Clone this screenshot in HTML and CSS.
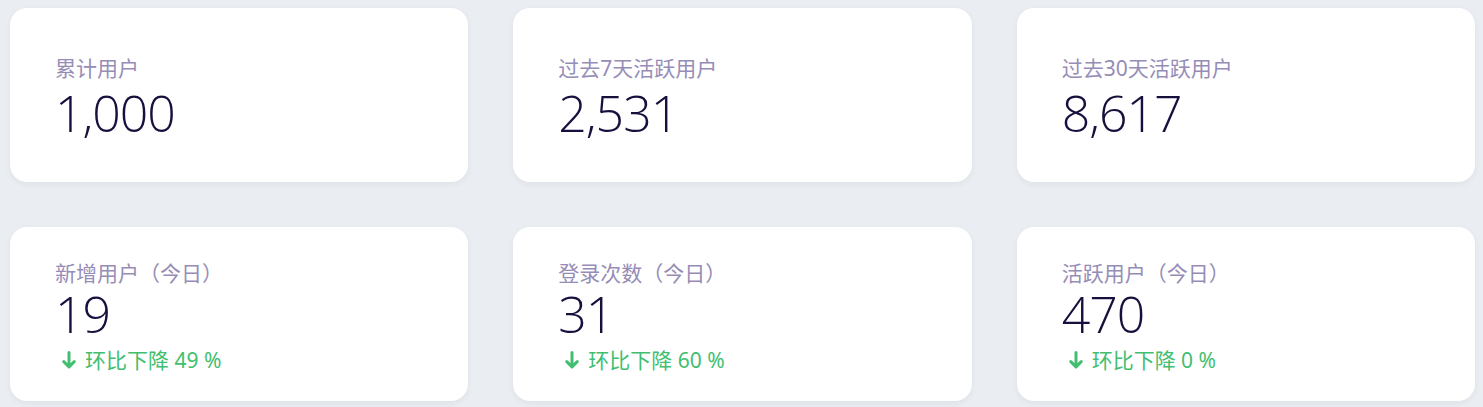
FILE: index.html
```html
<!DOCTYPE html>
<html lang="zh-CN">
<head>
<meta charset="utf-8">
<title>用户统计</title>
<link rel="stylesheet" href="styles.css">
</head>
<body>
<main class="stats">
  <section class="card">
    <div class="label">累计用户</div>
    <div class="value">1,000</div>
  </section>
  <section class="card">
    <div class="label">过去7天活跃用户</div>
    <div class="value">2,531</div>
  </section>
  <section class="card">
    <div class="label">过去30天活跃用户</div>
    <div class="value">8,617</div>
  </section>
  <section class="card card--trend">
    <div class="label">新增用户（今日）</div>
    <div class="value">19</div>
    <div class="trend">
      <svg class="trend-icon" viewBox="0 0 14 20" aria-hidden="true"><path d="M7 2.5V17M1.8 11.6L7 17l5.2-5.4"/></svg>
      <span>环比下降 49 %</span>
    </div>
  </section>
  <section class="card card--trend">
    <div class="label">登录次数（今日）</div>
    <div class="value">31</div>
    <div class="trend">
      <svg class="trend-icon" viewBox="0 0 14 20" aria-hidden="true"><path d="M7 2.5V17M1.8 11.6L7 17l5.2-5.4"/></svg>
      <span>环比下降 60 %</span>
    </div>
  </section>
  <section class="card card--trend">
    <div class="label">活跃用户（今日）</div>
    <div class="value">470</div>
    <div class="trend">
      <svg class="trend-icon" viewBox="0 0 14 20" aria-hidden="true"><path d="M7 2.5V17M1.8 11.6L7 17l5.2-5.4"/></svg>
      <span>环比下降 0 %</span>
    </div>
  </section>
</main>
</body>
</html>
```
FILE: styles.css
```css
html, body {
  margin: 0;
  padding: 0;
  background: #eaedf1;
}
body {
  font-family: "Noto Sans", "Noto Sans CJK SC", sans-serif;
}
.stats {
  display: grid;
  grid-template-columns: repeat(3, 1fr);
  grid-auto-rows: 174px;
  column-gap: 45px;
  row-gap: 45px;
  padding: 8px 8px 6px 10px;
}
.card {
  background: #ffffff;
  border-radius: 17px;
  box-shadow: 0 2px 6px rgba(40, 50, 80, 0.06);
  padding: 5px 45px 0;
  display: flex;
  flex-direction: column;
  justify-content: center;
}
.label {
  font-family: "Noto Sans", "Noto Sans CJK SC", sans-serif;
  font-size: 21px;
  line-height: 26px;
  color: #968db7;
}
.value {
  font-family: "Open Sans", "Noto Sans", sans-serif;
  font-weight: 350;
  font-size: 50px;
  line-height: 56px;
  letter-spacing: -1px;
  margin-top: 4px;
  color: #170f3d;
}
.card--trend .value {
  margin-top: 0;
}
.trend {
  display: flex;
  align-items: center;
  gap: 9px;
  margin-top: 4px;
  padding-left: 7px;
  font-size: 21px;
  line-height: 28px;
  color: #41be6f;
}
.trend-icon {
  width: 14px;
  height: 20px;
  flex: none;
  fill: none;
  stroke: #41be6f;
  stroke-width: 3;
  stroke-linecap: round;
  stroke-linejoin: round;
}
```
